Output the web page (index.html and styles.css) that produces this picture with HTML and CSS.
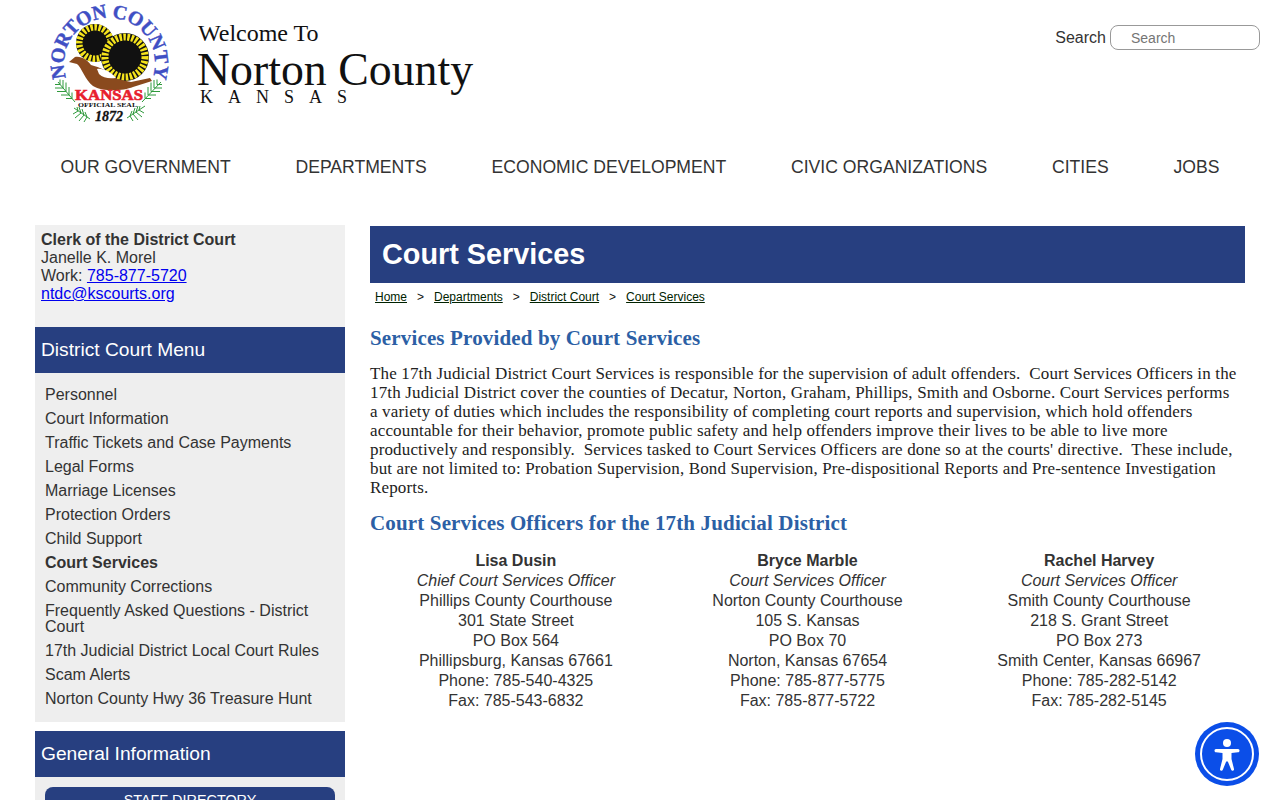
FILE: index.html
```html
<!DOCTYPE html>
<html lang="en">
<head>
<meta charset="UTF-8">
<meta name="viewport" content="width=device-width, initial-scale=1.0">
<title>Court Services - Norton County, Kansas</title>
<link rel="stylesheet" href="styles.css">
</head>
<body>

<header class="site-header">
    <a class="brand" href="#">
        <svg class="seal" viewBox="0 0 130 130" width="130" height="130" aria-label="Norton County seal">
            <defs>
                <path id="sealArc" d="M27.100 89.300 A45.500 45.500 0 1 1 101.900 89.300"/>
            </defs>
            <text class="seal-ring"><textPath href="#sealArc" startOffset="50%" text-anchor="middle">NORTON COUNTY</textPath></text>
            <g>
                <circle cx="50" cy="43" r="19" fill="#111"/>
                <circle class="seal-petal" cx="50" cy="43" r="15.500"/>
                <circle cx="50" cy="43" r="12.500" fill="#111"/>
                <circle cx="80" cy="57" r="24" fill="#111"/>
                <circle class="seal-petal" cx="80" cy="57" r="20"/>
                <circle cx="80" cy="57" r="16" fill="#111"/>
            </g>
            <path d="M24 62 L30 57 C37 56 42 60 46 65 C54 67 66 72 72 79 L86 82 L105 78 L107 81 L88 87 C78 91 58 92 48 86 C40 80 37 68 32 64 Z" fill="#8a4a1e"/>
            <path d="M52 69 C58 68 66 72 71 78 C64 79 58 78 54 74 Z" fill="#fff"/>
            <g class="seal-frond">
                <path d="M30 102 L13 82 M27 98.500 l0 -6 m0 6 l-6 0 M24 95 l0 -8 m0 8 l-8 0 M21 91.500 l0 -9 m0 9 l-9 0 M18 88 l0 -8 m0 8 l-8 0 M15 84.500 l0 -5 m0 5 l-5 0"/>
                <path d="M97 102 L116 82 M100 98.500 l0 -6 m0 6 l6 0 M103 95 l0 -8 m0 8 l8 0 M106 91.500 l0 -9 m0 9 l9 0 M109 88 l0 -8 m0 8 l8 0 M112 84.500 l0 -5 m0 5 l5 0"/>
                <path d="M45 119 L29 108 M42 117 l-2 -5 m2 5 l-3 5 M39 115 l-2 -6 m2 6 l-5 6 M36 113 l-2 -6 m2 6 l-6 5 M33 111 l-1 -4 m1 4 l-5 3"/>
                <path d="M82 118 L100 106 M85 116 l2 -5 m-2 5 l3 5 M88 114 l2 -6 m-2 6 l5 6 M91 112 l2 -6 m-2 6 l6 5 M94 110 l1 -4 m-1 4 l5 3"/>
            </g>
            <text class="seal-kansas" x="30" y="100" textLength="68" lengthAdjust="spacingAndGlyphs">KANSAS</text>
            <text class="seal-small" x="33" y="106.500" textLength="59" lengthAdjust="spacingAndGlyphs">OFFICIAL SEAL</text>
            <text class="seal-year" x="50" y="121" textLength="28" lengthAdjust="spacingAndGlyphs">1872</text>
        </svg>
        <span class="brand-text">
            <span class="brand-welcome">Welcome To</span>
            <span class="brand-name">Norton County</span>
            <span class="brand-state">KANSAS</span>
        </span>
    </a>
    <form class="search-box">
        <label for="q">Search</label>
        <input id="q" type="text" placeholder="Search">
    </form>
</header>

<nav class="main-nav">
    <a href="#">OUR GOVERNMENT</a>
    <a href="#">DEPARTMENTS</a>
    <a href="#">ECONOMIC DEVELOPMENT</a>
    <a href="#">CIVIC ORGANIZATIONS</a>
    <a href="#">CITIES</a>
    <a href="#">JOBS</a>
</nav>

<div class="page">
    <aside class="sidebar">
        <div class="contact-box">
            <strong>Clerk of the District Court</strong><br>
            Janelle K. Morel<br>
            Work: <a href="#">785-877-5720</a><br>
            <a href="#">ntdc@kscourts.org</a>
        </div>

        <h2 class="side-title">District Court Menu</h2>
        <ul class="side-menu">
            <li><a href="#">Personnel</a></li>
            <li><a href="#">Court Information</a></li>
            <li><a href="#">Traffic Tickets and Case Payments</a></li>
            <li><a href="#">Legal Forms</a></li>
            <li><a href="#">Marriage Licenses</a></li>
            <li><a href="#">Protection Orders</a></li>
            <li><a href="#">Child Support</a></li>
            <li class="current"><a href="#">Court Services</a></li>
            <li><a href="#">Community Corrections</a></li>
            <li><a href="#">Frequently Asked Questions - District Court</a></li>
            <li><a href="#">17th Judicial District Local Court Rules</a></li>
            <li><a href="#">Scam Alerts</a></li>
            <li><a href="#">Norton County Hwy 36 Treasure Hunt</a></li>
        </ul>

        <h2 class="side-title info-title">General Information</h2>
        <div class="side-buttons">
            <a class="side-btn" href="#">STAFF DIRECTORY</a>
        </div>
    </aside>

    <main class="content">
        <h1 class="page-title">Court Services</h1>
        <div class="crumbs">
            <a href="#">Home</a><span>&gt;</span>
            <a href="#">Departments</a><span>&gt;</span>
            <a href="#">District Court</a><span>&gt;</span>
            <a href="#">Court Services</a>
        </div>

        <h3 class="section-head">Services Provided by Court Services</h3>
        <p class="intro">The 17th Judicial District Court Services is responsible for the supervision of adult offenders.&nbsp; Court Services Officers in the 17th Judicial District cover the counties of Decatur, Norton, Graham, Phillips, Smith and Osborne. Court Services performs a variety of duties which includes the responsibility of completing court reports and supervision, which hold offenders accountable for their behavior, promote public safety and help offenders improve their lives to be able to live more productively and responsibly.&nbsp; Services tasked to Court Services Officers are done so at the courts' directive.&nbsp; These include, but are not limited to: Probation Supervision, Bond Supervision, Pre-dispositional Reports and Pre-sentence Investigation Reports.</p>

        <h3 class="section-head">Court Services Officers for the 17th Judicial District</h3>
        <div class="officers">
            <div class="officer">
                <strong>Lisa Dusin</strong>
                <em>Chief Court Services Officer</em>
                <span>Phillips County Courthouse</span>
                <span>301 State Street</span>
                <span>PO Box 564</span>
                <span>Phillipsburg, Kansas 67661</span>
                <span>Phone: 785-540-4325</span>
                <span>Fax: 785-543-6832</span>
            </div>
            <div class="officer">
                <strong>Bryce Marble</strong>
                <em>Court Services Officer</em>
                <span>Norton County Courthouse</span>
                <span>105 S. Kansas</span>
                <span>PO Box 70</span>
                <span>Norton, Kansas 67654</span>
                <span>Phone: 785-877-5775</span>
                <span>Fax: 785-877-5722</span>
            </div>
            <div class="officer">
                <strong>Rachel Harvey</strong>
                <em>Court Services Officer</em>
                <span>Smith County Courthouse</span>
                <span>218 S. Grant Street</span>
                <span>PO Box 273</span>
                <span>Smith Center, Kansas 66967</span>
                <span>Phone: 785-282-5142</span>
                <span>Fax: 785-282-5145</span>
            </div>
        </div>
    </main>
</div>

<button class="a11y-btn" aria-label="Accessibility">
    <svg viewBox="0 0 64 64" width="64" height="64">
        <circle cx="32" cy="32" r="32" fill="#0b4ee8"/>
        <circle cx="32" cy="32" r="26" fill="none" stroke="#fff" stroke-width="2"/>
        <circle cx="32" cy="21" r="4" fill="#fff"/>
        <path d="M21 27 L43 27 C44 27 44.500 27.800 44.500 28.700 C44.500 29.500 44 30.200 43 30.300 L36.500 31 L36.500 37 L39 47 C39.200 48 38.600 48.700 37.800 48.800 C37 49 36.500 48.500 36.200 47.800 L32.800 39.500 L31.200 39.500 L27.800 47.800 C27.500 48.500 27 49 26.200 48.800 C25.400 48.700 24.800 48 25 47 L27.500 37 L27.500 31 L21 30.300 C20 30.200 19.500 29.500 19.500 28.700 C19.500 27.800 20 27 21 27 Z" fill="#fff"/>
    </svg>
</button>

</body>
</html>
```

FILE: styles.css
```css
html, body {
    height: 800px;
    overflow: hidden;
}

body {
    margin: 0;
    background: #fff;
    color: #333;
    font-family: "Liberation Sans", Arial, sans-serif;
    font-size: 16px;
}

a {
    color: inherit;
    text-decoration: none;
}

/* header */
.site-header {
    display: flex;
    justify-content: space-between;
    align-items: flex-start;
    height: 130px;
    padding: 0 20px 0 45px;
}

.brand {
    display: flex;
    color: #111;
    font-family: "Liberation Serif", "Times New Roman", serif;
}

.seal {
    display: block;
}

.seal-ring {
    font: bold 20px "Liberation Serif", serif;
    letter-spacing: -.5px;
    fill: #3f4fc4;
    stroke: #3f4fc4;
    stroke-width: .4;
}

.seal-petal {
    fill: none;
    stroke: #f4e31c;
    stroke-width: 7;
    stroke-dasharray: 2.500 1.500;
}

.seal-frond path {
    fill: none;
    stroke: #2f9a3c;
    stroke-width: 1;
}

.seal-kansas {
    font: bold 15px "Liberation Serif", serif;
    fill: #e8202e;
    stroke: #e8202e;
    stroke-width: .6;
}

.seal-small {
    font: bold 6.500px "Liberation Serif", serif;
    fill: #111;
}

.seal-year {
    font: italic bold 14px "Liberation Serif", serif;
    fill: #111;
    stroke: #111;
    stroke-width: .3;
}

.brand-text {
    display: flex;
    flex-direction: column;
    padding: 19px 0 0 23px;
}

.brand-welcome {
    font-size: 24px;
    line-height: 28px;
}

.brand-name {
    font-size: 45.800px;
    line-height: 36px;
    margin: 5px 0 0 -1px;
}

.brand-state {
    font-size: 18px;
    line-height: 18px;
    letter-spacing: 15px;
    margin-left: 2px;
}

.search-box {
    display: flex;
    align-items: center;
    gap: 4px;
    padding-top: 25px;
}

.search-box input {
    box-sizing: border-box;
    width: 150px;
    height: 25px;
    padding: 2px 20px;
    border: 1px solid #999;
    border-radius: 8px;
    font-family: inherit;
    font-size: 14px;
    outline: none;
}

.search-box input::placeholder {
    color: #757575;
}

/* top nav */
.main-nav {
    display: flex;
    justify-content: center;
    gap: 64.800px;
    height: 95px;
    padding-top: 26px;
    box-sizing: border-box;
    font-size: 17.600px;
    line-height: 22px;
}

/* two columns */
.page {
    display: flex;
    gap: 25px;
    width: 1210px;
    margin-left: 35px;
}

.sidebar {
    flex: 0 0 310px;
}

.contact-box {
    height: 102px;
    box-sizing: border-box;
    padding: 6px 6px;
    background: #f0f0f0;
    line-height: 18px;
}

.contact-box a {
    color: #00e;
    text-decoration: underline;
}

.side-title {
    height: 46px;
    margin: 0;
    padding: 0 6px;
    background: #273f80;
    color: #fff;
    font-size: 19.200px;
    font-weight: normal;
    line-height: 45px;
}

.side-menu {
    list-style: none;
    margin: 0;
    padding: 10px 10px 11px;
    background: #eee;
}

.side-menu li {
    padding: 4px 0;
    line-height: 16px;
}

.side-menu .current {
    font-weight: bold;
}

.info-title {
    margin-top: 9px;
}

.side-buttons {
    padding: 10px;
    background: #eee;
}

.side-btn {
    display: block;
    padding: 5px 0;
    border-radius: 8px;
    background: #273f80;
    color: #fff;
    font-size: 14.400px;
    text-align: center;
}

.content {
    flex: 1;
    min-width: 0;
    padding-top: 1px;
}

.page-title {
    height: 57px;
    margin: 0;
    padding: 0 12px;
    background: #273f80;
    color: #fff;
    font-size: 28.800px;
    line-height: 56px;
}

.crumbs {
    display: flex;
    gap: 9px;
    padding: 7px 5px 0;
    color: #111;
    font-size: 12px;
    line-height: 14px;
}

.crumbs a {
    color: #020;
    text-decoration: underline;
}

.crumbs span {
    margin: 0 1px;
}

.section-head {
    margin: 0;
    color: #2c5fa5;
    font-family: "Liberation Serif", Georgia, serif;
    font-size: 21px;
    font-weight: bold;
    letter-spacing: .15px;
    line-height: 24px;
}

.crumbs + .section-head {
    margin-top: 22px;
}

.intro {
    margin: 14px 0 14px;
    padding-right: 6px;
    color: #222;
    font-family: "Liberation Serif", Georgia, serif;
    font-size: 17px;
    letter-spacing: .15px;
    line-height: 19px;
}

.officers {
    display: grid;
    grid-template-columns: repeat(3, 1fr);
    margin-top: 16px;
    text-align: center;
    line-height: 20px;
}

.officer > * {
    display: block;
}

.a11y-btn {
    position: fixed;
    right: 21px;
    bottom: 14px;
    padding: 0;
    border: 0;
    background: none;
}

.a11y-btn svg {
    display: block;
}
```
